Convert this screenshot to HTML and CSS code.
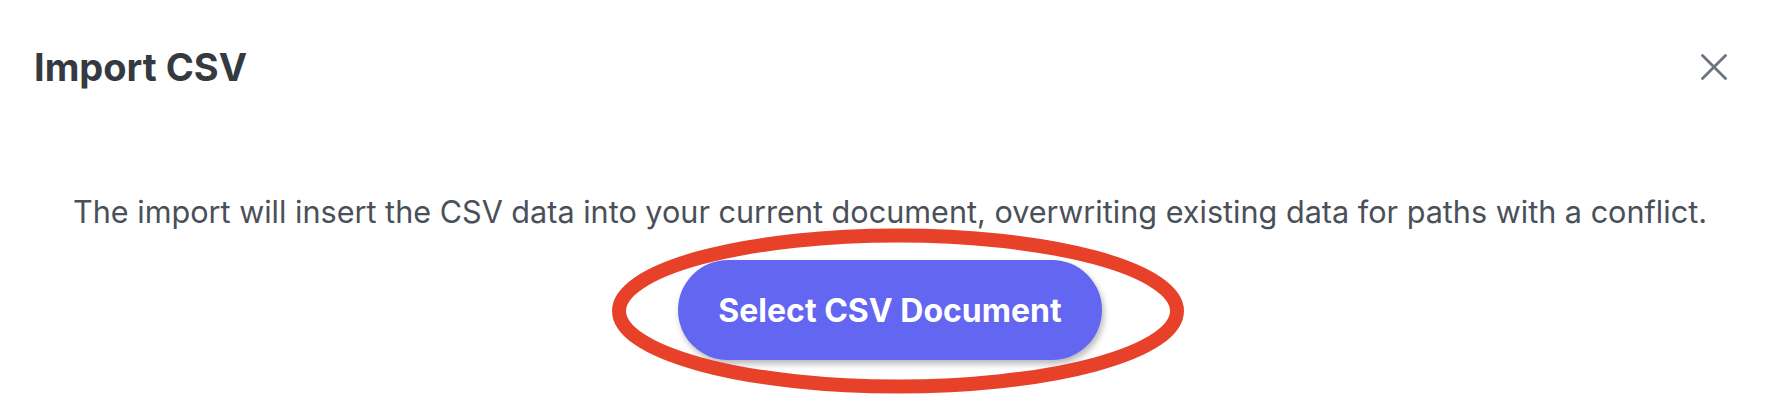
FILE: index.html
```html
<!DOCTYPE html>
<html lang="en">
<head>
<meta charset="utf-8">
<title>Import CSV</title>
<link rel="stylesheet" href="styles.css">
</head>
<body>
<div class="modal">
  <header class="modal-header">
    <h1 class="modal-title">Import CSV</h1>
    <button class="close-btn" aria-label="Close">
      <svg width="26" height="26" viewBox="0 0 26 26" fill="none" stroke="#6b7280" stroke-width="2.8" stroke-linecap="round">
        <path d="M1.5 1.5 L24.5 24.5 M24.5 1.5 L1.5 24.5"/>
      </svg>
    </button>
  </header>
  <div class="modal-body">
    <p class="description">The import will insert the CSV data into your current document, overwriting existing data for paths with a conflict.</p>
    <div class="action-row">
      <div class="action-wrap">
        <button class="primary-btn">Select CSV Document</button>
        <svg class="annotation" width="574" height="166" viewBox="0 0 574 166" fill="none">
          <ellipse cx="287" cy="83" rx="279" ry="75.5" stroke="#e8412a" stroke-width="14"/>
        </svg>
      </div>
    </div>
  </div>
</div>
</body>
</html>
```

FILE: styles.css
```css
* { box-sizing: border-box; }
html, body { margin: 0; padding: 0; background: #ffffff; }
body {
  font-family: Inter, "Noto Sans", "Liberation Sans", sans-serif;
  width: 1770px;
  height: 404px;
  overflow: hidden;
}
.modal {
  display: flex;
  flex-direction: column;
}
.modal-header {
  display: flex;
  align-items: center;
  justify-content: space-between;
  padding: 43px 43px 0 34px;
}
.modal-title {
  margin: 0;
  font-size: 38px;
  line-height: 48px;
  font-weight: 700;
  color: #343a40;
}
.close-btn {
  border: 0;
  background: none;
  padding: 0;
  width: 26px;
  height: 26px;
  display: flex;
  cursor: pointer;
}
.modal-body {
  display: flex;
  flex-direction: column;
  align-items: center;
  padding: 0 24px 0 34px;
}
.description {
  margin: 101px 0 0;
  font-size: 30.6px;
  line-height: 40px;
  color: #4a5059;
  text-align: center;
  white-space: nowrap;
}
.action-row {
  display: flex;
  justify-content: center;
  margin-top: 28px;
}
.action-wrap {
  position: relative;
}
.primary-btn {
  width: 424px;
  height: 100px;
  border: 0;
  border-radius: 50px;
  background: #6366f1;
  color: #ffffff;
  font-family: Inter, "Noto Sans", "Liberation Sans", sans-serif;
  font-size: 32px;
  font-weight: 700;
  box-shadow: 2px 4px 6px rgba(0, 0, 0, 0.28);
  display: flex;
  align-items: center;
  justify-content: center;
  padding: 0;
}
.annotation {
  position: absolute;
  left: -67px;
  top: -32px;
  pointer-events: none;
}
```
